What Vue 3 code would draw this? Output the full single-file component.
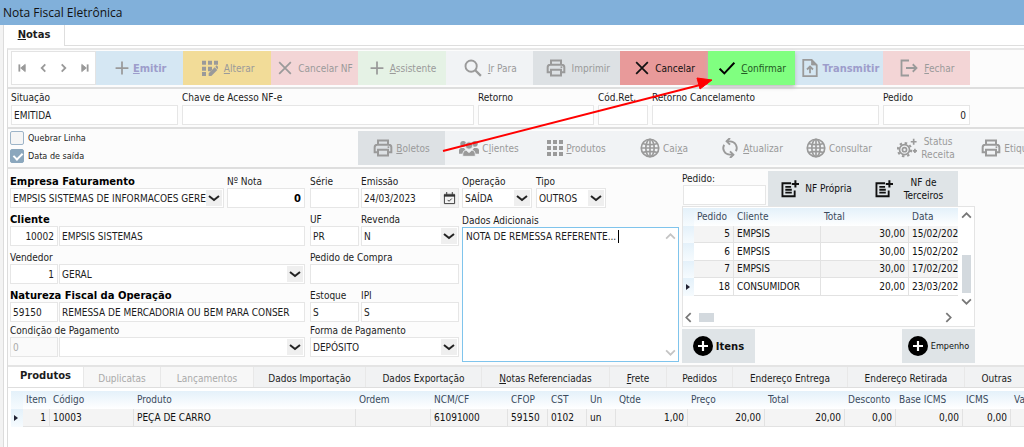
<script setup>
import { ref } from 'vue'

const icons = {
  plus: '<path d="M12 1v22M1 12h22" stroke-width="3"/>',
  gridEdit: '<g fill="currentColor" stroke="none"><path d="M0 1h6v6H0zM9 1h6v6H9zM18 1h6v6h-6zM0 10h6v6H0zM9 10h6v5l-2 2H9zM0 18h6v6H0z"/><path d="M10 24v-4l9-9 4 4-9 9zM20 10l2-2 3 3-2 3z"/></g>',
  cross: '<path d="M2 2l20 20M22 2L2 22" stroke-width="3"/>',
  search: '<circle cx="9.500" cy="9.500" r="7.500" stroke-width="2.500"/><path d="M15 15l7.500 7.500" stroke-width="3"/>',
  printer: '<path d="M6 8V3h12v5M6 17H2v-6q0-3 3-3h14q3 0 3 3v6h-4M6 14h12v7H6z" stroke-width="2.400"/><path d="M17.500 11h2" stroke-width="2"/>',
  check: '<path d="M1 13l7 7L23 4" stroke-width="3"/>',
  file: '<path d="M3 1h11l7 7v15H3zM12 19v-8M8 14l4-4 4 4" stroke-width="2.400"/><path d="M14 1v7h7z" fill="currentColor" stroke-width="1"/>',
  exit: '<path d="M12 2H2v20h10M8 12h14M17 7l5 5-5 5" stroke-width="2.400"/>',
  people: '<g fill="currentColor" stroke="none"><circle cx="5" cy="7" r="3.500"/><circle cx="19" cy="7" r="3.500"/><path d="M0 19v-4q0-3 3-3h3l3 4v3zM24 19v-4q0-3-3-3h-3l-3 4v3z"/></g><circle cx="12" cy="9" r="4.500" fill="currentColor" stroke="#f1f3f5" stroke-width="1"/><path d="M4.500 22v-3q0-4 4-4.500l3.500 3 3.500-3q4 .5 4 4.500v3z" fill="currentColor" stroke="#f1f3f5" stroke-width="1"/>',
  grid: '<path fill="currentColor" stroke="none" d="M0 0h6v6H0zM9 0h6v6H9zM18 0h6v6h-6zM0 9h6v6H0zM9 9h6v6H9zM18 9h6v6h-6zM0 18h6v6H0zM9 18h6v6H9zM18 18h6v6h-6z"/>',
  globe: '<circle cx="12" cy="12" r="10.500"/><ellipse cx="12" cy="12" rx="5" ry="10.500"/><path d="M12 1.500v21M1.500 12h21M3 6.500q9 3 18 0M3 17.500q9-3 18 0"/>',
  sync: '<path d="M8 4h4a8 8 0 0 1 7 12M16 20h-4A8 8 0 0 1 5 8" stroke-width="2.200"/><path d="M12 0L8 4l4 4M12 16l4 4-4 4" stroke-width="2.400"/>',
  gears: '<circle cx="9" cy="14" r="6" stroke-width="2"/><circle cx="9" cy="14" r="8" stroke-width="2.500" stroke-dasharray="3 3.280"/><circle cx="9" cy="14" r="2.500" stroke-width="2"/><path d="M20 1v7M16.500 4.500h7M21.500 13v5M19 15.500h5" stroke-width="2"/>',
  note: '<path d="M14 4H2v18h17v-8M6 9h8M6 13h9M6 17h9" stroke-width="2.600"/><path d="M20 0v10M15 5h10" stroke-width="2.800"/>',
  circlePlus: '<circle cx="12" cy="12" r="12" fill="#000" stroke="none"/><path d="M12 6v12M6 12h12" stroke="#fff" stroke-width="2.600"/>',
}

const mainActions = [
  { icon: 'plus', size: 's14', key: 'E', text: 'mitir', tone: 'blue', bold: true },
  { icon: 'gridEdit', size: 's16', key: 'A', text: 'lterar', tone: 'yellow' },
  { icon: 'cross', size: 's14', key: '', text: 'Cancelar NF', tone: 'pink' },
  { icon: 'plus', size: 's14', key: 'A', text: 'ssistente', tone: 'mint' },
  { icon: 'search', size: 's18', key: 'I', text: 'r Para', tone: 'light' },
  { icon: 'printer', size: 's20', key: '', text: 'Imprimir', tone: 'gray' },
  { icon: 'cross', size: 's14', key: '', text: 'Cancelar', tone: 'red' },
  { icon: 'check', size: 's16', key: 'C', text: 'onfirmar', tone: 'green' },
  { icon: 'file', size: 's18', key: '', text: 'Transmitir', tone: 'blue', bold: true },
  { icon: 'exit', size: 's18', key: 'F', text: 'echar', tone: 'pink' },
]

const extraActions = [
  { icon: 'printer', size: 's20', pre: '', key: 'B', text: 'oletos', tone: 'gray' },
  { icon: 'people', size: 's20', pre: 'C', key: 'l', text: 'ientes', tone: 'light' },
  { icon: 'grid', size: 's16', pre: '', key: 'P', text: 'rodutos', tone: 'light' },
  { icon: 'globe', size: 's20', pre: 'Cai', key: 'x', text: 'a', tone: 'light' },
  { icon: 'sync', size: 's20', pre: '', key: 'A', text: 'tualizar', tone: 'light' },
  { icon: 'globe', size: 's20', pre: '', key: '', text: 'Consultar', tone: 'light' },
  { icon: 'gears', size: 's20', pre: '', key: '', text: 'Status Receita', tone: 'light' },
  { icon: 'printer', size: 's20', pre: '', key: '', text: 'Etiquetas', tone: 'light' },
]

const orders = [
  ['5', 'EMPSIS', '30,00', '15/02/2023'],
  ['6', 'EMPSIS', '30,00', '15/02/2023'],
  ['7', 'EMPSIS', '30,00', '17/02/2023'],
  ['18', 'CONSUMIDOR', '20,00', '23/03/2023'],
]

const tabs = [
  { key: '', text: 'Produtos', state: 'active' },
  { key: '', text: 'Duplicatas', state: 'off' },
  { key: '', text: 'Lançamentos', state: 'off' },
  { key: '', text: 'Dados Importação', state: '' },
  { key: '', text: 'Dados Exportação', state: '' },
  { key: 'N', text: 'otas Referenciadas', state: '' },
  { key: 'F', text: 'rete', state: '' },
  { key: '', text: 'Pedidos', state: '' },
  { key: '', text: 'Endereço Entrega', state: '' },
  { key: '', text: 'Endereço Retirada', state: '' },
  { key: '', text: 'Outras', state: '' },
]

const columns = [
  { name: 'Item', cls: 'c-item num', value: '1' },
  { name: 'Código', cls: 'c-codigo', value: '10003' },
  { name: 'Produto', cls: 'c-produto', value: 'PEÇA DE CARRO' },
  { name: 'Ordem', cls: 'c-ordem', value: '' },
  { name: 'NCM/CF', cls: 'c-ncm', value: '61091000' },
  { name: 'CFOP', cls: 'c-cfop', value: '59150' },
  { name: 'CST', cls: 'c-cst', value: '0102' },
  { name: 'Un', cls: 'c-un', value: 'un' },
  { name: 'Qtde', cls: 'c-qtde num', value: '1,00' },
  { name: 'Preço', cls: 'c-preco num', value: '20,00' },
  { name: 'Total', cls: 'c-total num', value: '20,00' },
  { name: 'Desconto', cls: 'c-desc num', value: '0,00' },
  { name: 'Base ICMS', cls: 'c-base num', value: '0,00' },
  { name: 'ICMS', cls: 'c-icms num', value: '0,00' },
  { name: 'Valor', cls: 'c-valor num', value: '' },
]

const breakLine = ref(false)
const exitDate = ref(true)
const notes = ref('NOTA DE REMESSA REFERENTE...')
</script>

<template>
  <div class="window">
    <header class="titlebar">Nota Fiscal Eletrônica</header>
    <div class="frame">
      <nav class="top-tabs">
        <button class="top-tab" type="button"><u>N</u>otas</button>
      </nav>

      <main class="panel">
        <div class="toolbar">
          <div class="pager">
            <button type="button" aria-label="Primeiro"><svg viewBox="0 0 10 10"><path d="M1.500 1v8" /><path d="M8 1L3 5l5 4z" fill="currentColor" stroke-width="1" /></svg></button>
            <button type="button" aria-label="Anterior"><svg viewBox="0 0 10 10"><path d="M7 1L3 5l4 4" /></svg></button>
            <button type="button" aria-label="Próximo"><svg viewBox="0 0 10 10"><path d="M3 1l4 4-4 4" /></svg></button>
            <button type="button" aria-label="Último"><svg viewBox="0 0 10 10"><path d="M8.500 1v8" /><path d="M2 1l5 4-5 4z" fill="currentColor" stroke-width="1" /></svg></button>
          </div>
          <button v-for="(a, i) in mainActions" :key="i" type="button" class="action" :class="[a.tone, { bold: a.bold }]">
            <svg :class="a.size" viewBox="0 0 24 24" v-html="icons[a.icon]"></svg>
            <span><u v-if="a.key">{{ a.key }}</u>{{ a.text }}</span>
          </button>
        </div>

        <div class="status-row">
          <div class="field"><label for="situacao">Situação</label><input id="situacao" value="EMITIDA"></div>
          <div class="field"><label for="chave">Chave de Acesso NF-e</label><input id="chave"></div>
          <div class="field"><label for="retorno">Retorno</label><input id="retorno"></div>
          <div class="field"><label for="codret">Cód.Ret.</label><input id="codret"></div>
          <div class="field"><label for="retcanc">Retorno Cancelamento</label><input id="retcanc"></div>
          <div class="field"><label for="pedido">Pedido</label><input id="pedido" class="num" value="0"></div>
        </div>

        <div class="options-row">
          <div class="checks">
            <label><input v-model="breakLine" type="checkbox"><span>Quebrar Linha</span></label>
            <label><input v-model="exitDate" type="checkbox"><span>Data de saída</span></label>
          </div>
          <div class="extras">
            <button v-for="(a, i) in extraActions" :key="i" type="button" class="action" :class="a.tone">
              <svg :class="a.size" viewBox="0 0 24 24" v-html="icons[a.icon]"></svg>
              <span>{{ a.pre }}<u v-if="a.key">{{ a.key }}</u>{{ a.text }}</span>
            </button>
          </div>
        </div>

        <section class="form">
          <div class="col-a">
            <div class="line company">
              <div class="field"><label for="empresa" class="strong">Empresa Faturamento</label>
                <div class="combo"><select id="empresa"><option>EMPSIS SISTEMAS DE INFORMACOES GERENCIAIS</option></select><svg viewBox="0 0 16 16"><path d="M3 6l5 4 5-4" /></svg></div></div>
              <div class="field"><label for="nota">Nº Nota</label><input id="nota" class="num strong" value="0"></div>
            </div>
            <div class="field"><label for="cliente" class="strong">Cliente</label>
              <div class="pair"><input id="cliente" class="num" value="10002"><input aria-label="Nome do cliente" value="EMPSIS SISTEMAS"></div></div>
            <div class="field"><label for="vendedor">Vendedor</label>
              <div class="pair"><input id="vendedor" class="num" value="1">
                <div class="combo"><select aria-label="Nome do vendedor"><option>GERAL</option></select><svg viewBox="0 0 16 16"><path d="M3 6l5 4 5-4" /></svg></div></div></div>
            <div class="field"><label for="natureza" class="strong">Natureza Fiscal da Operação</label>
              <div class="pair"><input id="natureza" value="59150"><input aria-label="Descrição da natureza" value="REMESSA DE MERCADORIA OU BEM PARA CONSER"></div></div>
            <div class="field last"><label for="condicao">Condição de Pagamento</label>
              <div class="pair"><input id="condicao" value="0" disabled>
                <div class="combo"><select aria-label="Descrição da condição"><option></option></select><svg viewBox="0 0 16 16"><path d="M3 6l5 4 5-4" /></svg></div></div></div>
          </div>

          <div class="col-b">
            <div class="line two">
              <div class="field"><label for="serie">Série</label><input id="serie"></div>
              <div class="field"><label for="emissao">Emissão</label>
                <div class="date"><input id="emissao" value="24/03/2023"><button type="button" aria-label="Abrir calendário"><svg viewBox="0 0 14 14"><path d="M1.500 2.500h11v10h-11z" /><path d="M1 4h12" stroke-width="2" /><path d="M4 0v3M10 0v3M5 8.500l1.500 1.500 3-3" /></svg></button></div></div>
            </div>
            <div class="line two">
              <div class="field"><label for="uf">UF</label><input id="uf" value="PR"></div>
              <div class="field"><label for="revenda">Revenda</label>
                <div class="combo"><select id="revenda"><option>N</option></select><svg viewBox="0 0 16 16"><path d="M3 6l5 4 5-4" /></svg></div></div>
            </div>
            <div class="field"><label for="compra">Pedido de Compra</label><input id="compra"></div>
            <div class="line two">
              <div class="field"><label for="estoque">Estoque</label><input id="estoque" value="S"></div>
              <div class="field"><label for="ipi">IPI</label><input id="ipi" value="S"></div>
            </div>
            <div class="field last"><label for="forma">Forma de Pagamento</label>
              <div class="combo"><select id="forma"><option>DEPÓSITO</option></select><svg viewBox="0 0 16 16"><path d="M3 6l5 4 5-4" /></svg></div></div>
          </div>

          <div class="col-c">
            <div class="line kinds">
              <div class="field"><label for="operacao">Operação</label>
                <div class="combo"><select id="operacao"><option>SAÍDA</option></select><svg viewBox="0 0 16 16"><path d="M3 6l5 4 5-4" /></svg></div></div>
              <div class="field"><label for="tipo">Tipo</label>
                <div class="combo"><select id="tipo"><option>OUTROS</option></select><svg viewBox="0 0 16 16"><path d="M3 6l5 4 5-4" /></svg></div></div>
            </div>
            <label for="dados" class="notes-label">Dados Adicionais</label>
            <div class="notes">
              <textarea id="dados" v-model="notes"></textarea>
              <i class="caret" aria-hidden="true"></i>
              <div class="notes-scroll" aria-hidden="true">
                <svg viewBox="0 0 12 8"><path d="M1 6.500l5-5 5 5" /></svg>
                <svg viewBox="0 0 12 8"><path d="M1 1.500l5 5 5-5" /></svg>
              </div>
            </div>
          </div>

          <div class="col-d">
            <div class="search">
              <div class="field"><label for="busca">Pedido:</label><input id="busca"></div>
              <button type="button" class="action solid"><svg class="s18" viewBox="0 0 25 24" v-html="icons.note"></svg><span>NF Própria</span></button>
              <button type="button" class="action solid narrow"><svg class="s18" viewBox="0 0 25 24" v-html="icons.note"></svg><span>NF de Terceiros</span></button>
            </div>
            <div class="orders">
              <div class="orders-view">
                <table>
                  <thead><tr><th class="mark"></th><th class="o-ped num">Pedido</th><th class="o-cli">Cliente</th><th class="o-tot">Total</th><th class="o-dat">Data</th></tr></thead>
                  <tbody>
                    <tr v-for="(o, i) in orders" :key="o[0]">
                      <td class="mark"><svg v-if="i === 3" viewBox="0 0 4 6"><path d="M0 0l4 3-4 3z" /></svg></td>
                      <td class="num">{{ o[0] }}</td><td>{{ o[1] }}</td><td class="num">{{ o[2] }}</td><td>{{ o[3] }}</td>
                    </tr>
                  </tbody>
                </table>
              </div>
              <div class="vbar" aria-hidden="true">
                <svg viewBox="0 0 12 8"><path d="M1 6.500l5-5 5 5" /></svg>
                <i></i>
                <svg viewBox="0 0 12 8"><path d="M1 1.500l5 5 5-5" /></svg>
              </div>
              <div class="hbar" aria-hidden="true">
                <svg viewBox="0 0 8 12"><path d="M6.500 1l-5 5 5 5" /></svg>
                <i></i>
                <svg viewBox="0 0 8 12"><path d="M1.500 1l5 5-5 5" /></svg>
              </div>
            </div>
            <div class="order-actions">
              <button type="button" class="action solid items"><svg class="s20" viewBox="0 0 24 24" v-html="icons.circlePlus"></svg><span>Itens</span></button>
              <button type="button" class="action solid small"><svg class="s20" viewBox="0 0 24 24" v-html="icons.circlePlus"></svg><span>Empenho</span></button>
            </div>
          </div>
        </section>

        <nav class="tabs">
          <button v-for="t in tabs" :key="t.text" type="button" :class="t.state" :disabled="t.state === 'off'"><u v-if="t.key">{{ t.key }}</u>{{ t.text }}</button>
        </nav>

        <div class="products">
          <table>
            <thead><tr><th class="mark"></th><th v-for="c in columns" :key="c.name" :class="c.cls">{{ c.name }}</th></tr></thead>
            <tbody><tr><td class="mark"><svg viewBox="0 0 4 6"><path d="M0 0l4 3-4 3z" /></svg></td><td v-for="c in columns" :key="c.name" :class="c.cls">{{ c.value }}</td></tr></tbody>
          </table>
        </div>
      </main>
    </div>

    <svg class="arrow" viewBox="0 0 280 80" aria-hidden="true">
      <path d="M3 76L260 10" />
      <path class="head" d="M272 5L257 3L260 14z" />
    </svg>
  </div>
</template>

<style>
body { margin: 0; overflow: hidden; background: #fff; }
</style>

<style scoped>
* { box-sizing: border-box; }
.window {
  position: relative; min-height: 100vh; display: flex; flex-direction: column; overflow: hidden;
  font: 10px/12px "DejaVu Sans Condensed", "DejaVu Sans", "Noto Sans", sans-serif; color: #1c1c1c; background: #fff;
}
button, input, select, textarea { font: inherit; color: inherit; border: 0; border-radius: 0; padding: 0; margin: 0; background: none; outline: 0; }
svg { display: block; flex: none; fill: none; stroke: currentColor; stroke-width: 2; }
u { text-underline-offset: 1px; }
.titlebar { height: 25px; padding-left: 3px; background: #81b0da; color: #111; font: 12px/26px "Open Sans", "Noto Sans", sans-serif; }
.frame { flex: 1; display: flex; flex-direction: column; margin-left: 3px; border-left: 1px solid #dcdcdc; box-shadow: -3px 0 0 #f3f3f3; }
.top-tabs { display: flex; height: 21px; border-bottom: 1px solid #dedede; margin-bottom: 2px; }
.top-tab { width: 61px; height: 21px; border-right: 1px solid #dedede; background: #fff; font-family: "DejaVu Sans", sans-serif; font-weight: bold; padding-bottom: 2px; }
.panel { flex: 1; display: flex; flex-direction: column; margin-left: 3px; min-width: 0; border-left: 1px solid #dcdcdc; border-top: 2px solid #e8e8e8; background: #fcfcfc; }

.toolbar { display: flex; height: 39px; padding: 1px 54px 2px 3px; border-bottom: 2px solid #dedede; }
.pager { width: 85px; display: flex; align-items: center; justify-content: space-around; border: 1px solid #e3e3e3; color: #999; background: #fff; }
.pager svg { width: 9px; height: 10px; }
.action { flex: 1 1 0; min-width: 0; display: flex; align-items: center; justify-content: center; gap: 6px; padding-left: 2px; color: #9a9a9a; line-height: 13px; }
.s14 { width: 14px; height: 14px; }
.s16 { width: 16px; height: 16px; }
.s18 { width: 18px; height: 18px; }
.s20 { width: 20px; height: 20px; }
.blue { background: #d5e7f3; }
.blue span { color: #9d9dcb; }
.bold { font-weight: bold; font-size: 11px; gap: 4px; }
.yellow { background: #f2dc98; }
.pink { background: #f3d5d6; }
.mint { background: #e5f2e5; }
.light { background: #f1f3f5; }
.gray { background: #dde1e4; }
.red { background: #e89a9a; color: #111; }
.green { background: #80ff80; color: #000; box-shadow: 0 2px 4px #b9b9b9; z-index: 1; }
.green span { color: #245a24; }

.field { display: flex; flex-direction: column; min-width: 0; }
.field > label { height: 12px; white-space: nowrap; }
input, .combo { width: 100%; height: 20px; border: 1px solid #e6e6e6; background: #fff; }
input { padding: 0 2px; }
input:disabled { background: #fafafa; color: #aaa; }
input.num { text-align: right; padding-right: 3px; }
.num { text-align: right; }
.strong { font-family: "DejaVu Sans", sans-serif; font-weight: bold; color: #000; }
.combo { position: relative; }
.combo select { appearance: none; display: block; width: 100%; height: 18px; line-height: 17px; padding: 0 19px 0 2px; }
.combo svg { position: absolute; right: 1px; top: 1px; width: 16px; height: 16px; background: #efefef; stroke: #222; pointer-events: none; }

.status-row { display: grid; grid-template-columns: 167px 1fr 116px 50px 227px 87px; gap: 4px; padding: 3px 54px 2px 3px; border-bottom: 2px solid #dedede; }
.status-row .field > label { height: 13px; }
.options-row { display: flex; height: 40px; padding-left: 2px; border-bottom: 2px solid #dedede; }
.checks { width: 348px; flex: none; display: flex; flex-direction: column; gap: 1px; font-size: 9px; }
.checks label { display: flex; align-items: center; gap: 4px; height: 17px; }
.checks input { appearance: none; width: 14px; height: 14px; padding: 0; border: 1px solid #9db4c8; border-radius: 2px; background: #f5f5f5; }
.checks input:checked { background: #8ba7bd; border-color: #8ba7bd; }
.checks input:checked::after { content: ""; display: block; width: 4px; height: 7px; margin: 1px 0 0 4px; border: solid #fff; border-width: 0 2px 2px 0; transform: rotate(45deg); }
.extras { display: grid; grid-template-columns: repeat(4, 87px 88px); flex: 1; min-width: 0; overflow: hidden; padding: 2px 0; }
.extras .action { gap: 3px; padding-left: 0; white-space: nowrap; }
.extras .action:nth-child(7) span { width: 36px; text-align: center; white-space: normal; }

.form { display: flex; padding: 2px 0 2px 2px; }
.col-a, .col-b { display: flex; flex-direction: column; gap: 6px; padding-top: 5px; }
.col-a { width: 295px; margin-right: 5px; }
.col-b { width: 149px; margin-right: 3px; }
.col-c { width: 143px; padding: 5px 0 1px; display: flex; flex-direction: column; }
.last { margin-top: -3px; }
.line, .pair { display: grid; gap: 2px; }
.company { grid-template-columns: 214px 1fr; gap: 3px; }
.company .combo select { padding-right: 17px; }
.pair { grid-template-columns: 48px 1fr; gap: 1px; }
.two { grid-template-columns: 49px 1fr; }
.date { display: flex; height: 20px; border: 1px solid #e6e6e6; background: #fff; }
.date input { border: 0; height: 18px; flex: 1; min-width: 0; }
.date button { width: 18px; display: grid; place-items: center; background: #f3f3f3; }
.date svg { width: 13px; height: 13px; stroke: #333; stroke-width: 1; }
.kinds { grid-template-columns: 70px 70px; gap: 4px; }
.notes-label { margin-top: 7px; height: 12px; }
.notes { position: relative; flex: 1; width: 217px; border: 1px solid #7fc4ec; background: #fff; display: flex; }
.notes textarea { flex: 1; resize: none; padding: 3px; line-height: 12px; }
.caret { position: absolute; left: 155px; top: 2px; width: 1px; height: 13px; background: #000; }
.notes-scroll { width: 16px; display: flex; flex-direction: column; justify-content: space-between; align-items: center; padding: 5px 0; color: #c4c4c4; }
.notes-scroll svg { width: 11px; height: 7px; }

.col-d { width: 293px; margin-left: 77px; }
.search { display: flex; height: 35px; }
.search .field { width: 84px; margin: 2px 2px 0 0; }
.search input { margin-left: 1px; width: 83px; }
.solid { background: #dfe4e7; color: #111; }
.search .solid { flex: 0 0 95px; }
.narrow span { width: 50px; text-align: center; }
.orders { display: grid; grid-template-columns: 1fr 16px; height: 121px; border: 1px solid #e4e4e4; background: #fff; }
.orders-view { height: 102px; overflow: hidden; }
table { border-collapse: separate; border-spacing: 0; table-layout: fixed; }
th { height: 18px; font-weight: normal; color: #3a4a5c; text-align: left; padding: 0 3px; background: linear-gradient(#e4f1fa, #fff); white-space: nowrap; }
th.num { text-align: left; }
td { height: 18px; padding: 0 3px; border-right: 1px solid #e2e2e2; border-bottom: 1px solid #e2e2e2; white-space: nowrap; color: #111; }
.orders tbody tr:nth-child(odd) td { height: 17px; }
.mark { width: 11px; padding: 0 0 0 3px; border: 0; background: linear-gradient(#e4f1fa, #f6fbfe); }
.mark svg { width: 4px; height: 6px; stroke: none; fill: #223; }
.orders table { width: 300px; margin-top: 1px; }
.orders tbody tr:nth-child(odd) td:not(.mark), .products tbody td:not(.mark) { background: #f4f4f4; }
.o-ped { width: 40px; }
.o-cli { width: 87px; }
.o-tot { width: 88px; }
.vbar { display: flex; flex-direction: column; align-items: center; padding: 5px 0 6px; color: #777; }
.vbar svg { width: 11px; height: 7px; }
.vbar i { width: 9px; height: 38px; margin: auto 0 5px; background: #d3d9de; }
.hbar { grid-column: 1 / -1; display: flex; align-items: center; padding: 0 22px 2px 2px; color: #777; }
.hbar svg { width: 7px; height: 11px; }
.hbar i { width: 15px; height: 9px; margin: 0 auto 0 7px; background: #d3d9de; }
.order-actions { display: flex; justify-content: space-between; height: 34px; margin-top: 2px; }
.order-actions .action { flex: 0 0 73px; gap: 3px; padding: 0; }
.order-actions .items { font-family: "DejaVu Sans", sans-serif; font-weight: bold; }
.order-actions .small { font-size: 9px; }

.tabs { display: grid; grid-template-columns: 76px 77px 93px 112px 116px 128px 57px 66px 115px 117px 64px; height: 23px; border-top: 2px solid #e4e4e4; border-bottom: 1px solid #dedede; background: #f1f2f3; overflow: hidden; }
.tabs button { border-right: 1px solid #e8e8e8; white-space: nowrap; padding-top: 2px; }
.tabs .off { color: #aaa; background: #f7f7f7; }
.tabs .active { background: #fff; font-family: "DejaVu Sans", sans-serif; font-weight: bold; padding: 0 0 3px; height: 21px; }
.products { flex: 1; padding: 3px 0 0 3px; background: #fff; overflow: hidden; }
.products table { width: 1048px; }
.products .mark { width: 12px; }
.c-item { width: 27px; }
.c-codigo { width: 84px; }
.c-produto { width: 222px; }
.c-ordem { width: 75px; }
.c-ncm { width: 77px; }
.c-cfop { width: 40px; }
.c-cst { width: 39px; }
.c-un { width: 29px; }
.c-qtde { width: 72px; }
.c-preco { width: 77px; }
.c-total { width: 80px; }
.c-desc { width: 51px; }
.c-base { width: 67px; }
.c-icms { width: 48px; }

.arrow { position: absolute; left: 440px; top: 75px; width: 280px; height: 80px; stroke: #f00; stroke-width: 2; z-index: 2; pointer-events: none; }
.arrow .head { fill: #f00; stroke-width: 1; }
</style>
